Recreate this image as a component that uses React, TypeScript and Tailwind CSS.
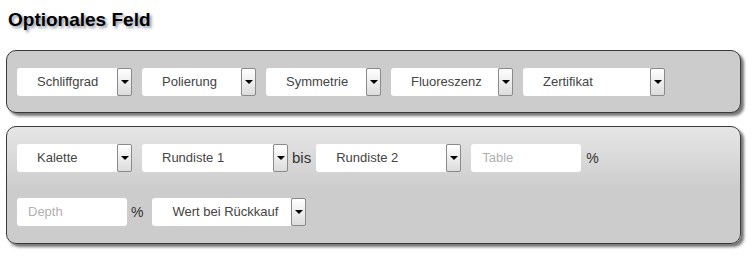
import React from "react";

type SelectProps = {
  label: string;
  width: number;
};

const font = { fontFamily: '"Liberation Sans", Arial, sans-serif' };

function FakeSelect({ label, width }: SelectProps) {
  return (
    <div className="flex h-[28px] shrink-0">
      <div
        className="flex items-center h-full bg-white rounded-l-[3px] pl-[20px] text-[13px] text-[#444]"
        style={{ width }}
      >
        {label}
      </div>
      <div className="flex items-center justify-center w-[15px] h-full border border-[#8a8a8a] rounded-[2px] bg-[linear-gradient(to_bottom,#ffffff,#dcdcdc)]">
        <span className="block w-0 h-0 border-l-[4px] border-r-[4px] border-t-[4px] border-l-transparent border-r-transparent border-t-black" />
      </div>
    </div>
  );
}

function FakeInput({ placeholder, width }: SelectProps) {
  return (
    <div
      className="flex items-center h-[28px] shrink-0 bg-white rounded-[3px] pl-[11px] text-[13px] text-[#b0b0b0]"
      style={{ width }}
    >
      {placeholder}
    </div>
  );
}

export default function App() {
  return (
    <div className="bg-white w-[756px] h-[262px] overflow-hidden" style={font}>
      <h2 className="pl-[8px] pt-[9px] text-[19px] leading-[22px] font-bold text-black [text-shadow:2px_2px_3px_rgba(50,60,90,0.55)]">
        Optionales Feld
      </h2>

      {/* Panel 1 */}
      <div className="mt-[19px] ml-[6px] w-[735px] rounded-[10px] border border-[#3a3a3a] bg-[#cccccc] shadow-[3px_3px_3px_rgba(0,0,0,0.55)] pt-[17px] pb-[16px] pl-[10px]">
        <div className="flex items-center gap-[10px]">
          <FakeSelect label="Schliffgrad" width={100} />
          <FakeSelect label="Polierung" width={99} />
          <FakeSelect label="Symmetrie" width={100} />
          <FakeSelect label="Fluoreszenz" width={107} />
          <FakeSelect label="Zertifikat" width={127} />
        </div>
      </div>

      {/* Panel 2 */}
      <div className="mt-[13px] ml-[6px] w-[735px] rounded-[10px] border border-[#3a3a3a] bg-[linear-gradient(to_bottom,#e6e6e6,#cccccc_55%)] shadow-[3px_3px_3px_rgba(0,0,0,0.55)] pt-[17px] pb-[17px] pl-[10px]">
        <div className="flex items-center">
          <FakeSelect label="Kalette" width={100} />
          <div className="w-[10px]" />
          <FakeSelect label="Rundiste 1" width={131} />
          <span className="ml-[4px] mr-[5px] text-[15px] text-[#333]">bis</span>
          <FakeSelect label="Rundiste 2" width={130} />
          <div className="w-[10px]" />
          <FakeInput placeholder="Table" width={110} />
          <span className="ml-[5px] text-[14px] text-[#333]">%</span>
        </div>
        <div className="flex items-center mt-[26px]">
          <FakeInput placeholder="Depth" width={110} />
          <span className="ml-[4px] mr-[9px] text-[14px] text-[#333]">%</span>
          <FakeSelect label="Wert bei Rückkauf" width={139} />
        </div>
      </div>
    </div>
  );
}
